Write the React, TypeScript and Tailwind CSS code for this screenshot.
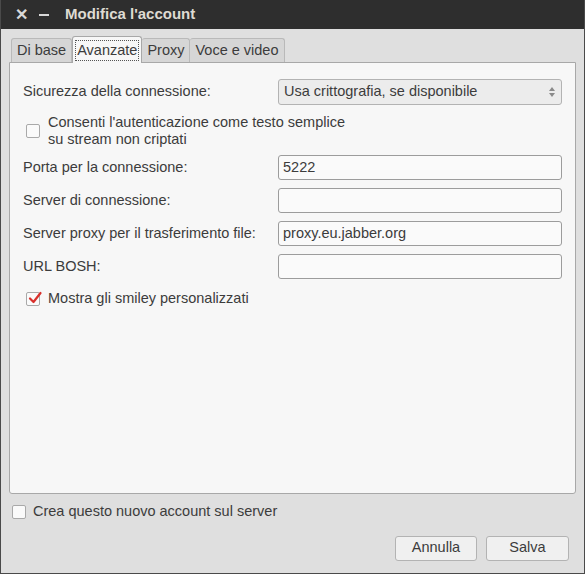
import React from "react";

const font = { fontFamily: '"Liberation Sans", Arial, sans-serif' };

function Check({ checked }: { checked?: boolean }) {
  return (
    <div className="w-[14px] h-[14px] rounded-[2px] border border-[#a9a9a9] bg-[#fafafa] flex items-center justify-center shrink-0 relative">
      {checked && (
        <svg width="14" height="14" viewBox="0 0 14 14" className="absolute left-[1px] top-[-2px]">
          <path d="M2 7.5 L5.5 11 L12.5 2" stroke="#d9302c" strokeWidth="2.2" fill="none" strokeLinecap="round" strokeLinejoin="round" />
        </svg>
      )}
    </div>
  );
}

function Entry({ value }: { value?: string }) {
  return (
    <div className="w-[284px] h-[25px] rounded-[3px] border border-[#9c9c9c] bg-[#fafafa] flex items-center px-[4px] text-[14.5px] text-[#3c3c3c]">
      {value}
    </div>
  );
}

function Row({ label, value, mt }: { label: string; value?: string; mt: string }) {
  return (
    <div className={`flex items-center justify-between ${mt}`}>
      <span className="text-[14.5px] text-[#3c3c3c]">{label}</span>
      <Entry value={value} />
    </div>
  );
}

export default function App() {
  return (
    <div style={font} className="w-[585px] h-[574px] bg-[#dfdfdf] flex flex-col border-x border-b border-[#4a4a4a] overflow-hidden">
      <div className="h-[29px] bg-[#2e2e2e] flex items-center shrink-0">
        <span className="ml-[14px] w-[12px] text-[#d8d8d8] text-[16px] font-bold leading-none">✕</span>
        <span className="ml-[12px] w-[10px] h-[2px] bg-[#d8d8d8]" />
        <span className="ml-[16px] text-[#dfdbd2] text-[15px] font-bold">Modifica l'account</span>
      </div>
      <div className="flex items-end h-[33px] px-[9px] shrink-0">
        <div className="h-[24px] px-[5px] bg-[#d6d6d6] border border-b-0 border-[#b9b9b9] rounded-t-[3px] flex items-center text-[14.5px] text-[#3c3c3c] ml-[1px]">Di base</div>
        <div className="h-[27px] px-[2px] bg-[#f7f7f7] border border-b-0 border-[#a8a8a8] rounded-t-[3px] flex items-center text-[14.5px] text-[#3c3c3c] -mb-[1px] relative z-10">
          <span className="border border-dotted border-[#555] px-[1px] leading-[19px]">Avanzate</span>
        </div>
        <div className="h-[24px] px-[5px] bg-[#d6d6d6] border border-b-0 border-l-0 border-[#b9b9b9] rounded-t-[3px] flex items-center text-[14.5px] text-[#3c3c3c]">Proxy</div>
        <div className="h-[24px] px-[5px] bg-[#d6d6d6] border border-b-0 border-l-0 border-[#b9b9b9] rounded-t-[3px] flex items-center text-[14.5px] text-[#3c3c3c]">Voce e video</div>
      </div>
      <div className="mx-[8px] h-[432px] bg-[#f7f7f7] border border-[#a8a8a8] rounded-b-[3px] px-[13px] pt-[16px] shrink-0 flex flex-col">
        <div className="flex items-center justify-between">
          <span className="text-[14.5px] text-[#3c3c3c]">Sicurezza della connessione:</span>
          <div className="w-[284px] h-[26px] rounded-[3px] border border-[#b3b3b3] bg-[#ececec] flex items-center justify-between px-[5px] text-[14.5px] text-[#3c3c3c]">
            <span>Usa crittografia, se disponibile</span>
            <svg width="8" height="14" viewBox="0 0 8 14">
              <path d="M4 2 L7 6 L1 6 Z" fill="#8a8a8a" />
              <path d="M4 12 L7 8 L1 8 Z" fill="#8a8a8a" />
            </svg>
          </div>
        </div>
        <div className="flex items-center mt-[9px] ml-[3px]">
          <Check />
          <div className="ml-[8px] text-[14.5px] text-[#3c3c3c] leading-[17px]">
            Consenti l'autenticazione come testo semplice
            <br />
            su stream non criptati
          </div>
        </div>
        <Row label="Porta per la connessione:" value="5222" mt="mt-[7px]" />
        <Row label="Server di connessione:" mt="mt-[8px]" />
        <Row label="Server proxy per il trasferimento file:" value="proxy.eu.jabber.org" mt="mt-[8px]" />
        <Row label="URL BOSH:" mt="mt-[8px]" />
        <div className="flex items-center mt-[9px] ml-[3px]">
          <Check checked />
          <span className="ml-[8px] text-[14.5px] text-[#3c3c3c]">Mostra gli smiley personalizzati</span>
        </div>
      </div>
      <div className="flex items-center mt-[7px] ml-[11px]">
        <Check />
        <span className="ml-[7px] text-[14.5px] text-[#3c3c3c]">Crea questo nuovo account sul server</span>
      </div>
      <div className="flex justify-end gap-[9px] mt-[13px] mr-[15px]">
        <div className="w-[82px] h-[25px] rounded-[3px] border border-[#b3b3b3] bg-[#f0f0f0] flex items-center justify-center text-[14.5px] text-[#3c3c3c]">Annulla</div>
        <div className="w-[83px] h-[25px] rounded-[3px] border border-[#b3b3b3] bg-[#f0f0f0] flex items-center justify-center text-[14.5px] text-[#3c3c3c]">Salva</div>
      </div>
    </div>
  );
}
